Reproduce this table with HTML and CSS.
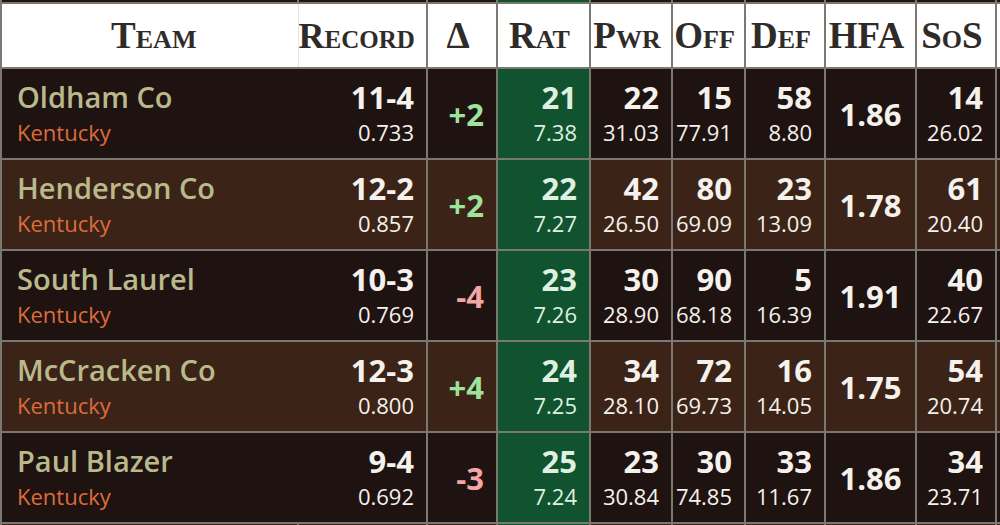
FILE: index.html
```html
<!DOCTYPE html>
<html>
<head>
<meta charset="utf-8">
<link rel="stylesheet" href="styles.css">
</head>
<body>
<div class="frame">
<table class="ratings">
  <colgroup>
    <col class="c-team"><col class="c-rec"><col class="c-delta"><col class="c-rat"><col class="c-pwr"><col class="c-off"><col class="c-def"><col class="c-hfa"><col class="c-sos"><col class="c-more">
  </colgroup>
  <tr class="stub">
    <td class="team-cell"></td><td class="rec"></td><td></td><td class="rat"></td><td></td><td></td><td></td><td></td><td></td><td></td>
  </tr>
  <tr class="head">
    <th class="h-team">Team</th>
    <th class="h-rec">Record</th>
    <th>Δ</th>
    <th>Rat</th>
    <th>Pwr</th>
    <th>Off</th>
    <th>Def</th>
    <th>HFA</th>
    <th>SoS</th>
    <th></th>
  </tr>
  <tr class="row dark">
    <td class="team-cell"><div class="name">Oldham Co</div><div class="state">Kentucky</div></td>
    <td class="rec num"><div class="big">11-4</div><div class="small">0.733</div></td>
    <td class="delta up">+2</td>
    <td class="rat num"><div class="big">21</div><div class="small">7.38</div></td>
    <td class="num"><div class="big">22</div><div class="small">31.03</div></td>
    <td class="num"><div class="big">15</div><div class="small">77.91</div></td>
    <td class="num"><div class="big">58</div><div class="small">8.80</div></td>
    <td class="hfa">1.86</td>
    <td class="num"><div class="big">14</div><div class="small">26.02</div></td>
    <td></td>
  </tr>
  <tr class="row brown">
    <td class="team-cell"><div class="name">Henderson Co</div><div class="state">Kentucky</div></td>
    <td class="rec num"><div class="big">12-2</div><div class="small">0.857</div></td>
    <td class="delta up">+2</td>
    <td class="rat num"><div class="big">22</div><div class="small">7.27</div></td>
    <td class="num"><div class="big">42</div><div class="small">26.50</div></td>
    <td class="num"><div class="big">80</div><div class="small">69.09</div></td>
    <td class="num"><div class="big">23</div><div class="small">13.09</div></td>
    <td class="hfa">1.78</td>
    <td class="num"><div class="big">61</div><div class="small">20.40</div></td>
    <td></td>
  </tr>
  <tr class="row dark">
    <td class="team-cell"><div class="name">South Laurel</div><div class="state">Kentucky</div></td>
    <td class="rec num"><div class="big">10-3</div><div class="small">0.769</div></td>
    <td class="delta down">-4</td>
    <td class="rat num"><div class="big">23</div><div class="small">7.26</div></td>
    <td class="num"><div class="big">30</div><div class="small">28.90</div></td>
    <td class="num"><div class="big">90</div><div class="small">68.18</div></td>
    <td class="num"><div class="big">5</div><div class="small">16.39</div></td>
    <td class="hfa">1.91</td>
    <td class="num"><div class="big">40</div><div class="small">22.67</div></td>
    <td></td>
  </tr>
  <tr class="row brown">
    <td class="team-cell"><div class="name">McCracken Co</div><div class="state">Kentucky</div></td>
    <td class="rec num"><div class="big">12-3</div><div class="small">0.800</div></td>
    <td class="delta up">+4</td>
    <td class="rat num"><div class="big">24</div><div class="small">7.25</div></td>
    <td class="num"><div class="big">34</div><div class="small">28.10</div></td>
    <td class="num"><div class="big">72</div><div class="small">69.73</div></td>
    <td class="num"><div class="big">16</div><div class="small">14.05</div></td>
    <td class="hfa">1.75</td>
    <td class="num"><div class="big">54</div><div class="small">20.74</div></td>
    <td></td>
  </tr>
  <tr class="row dark">
    <td class="team-cell"><div class="name">Paul Blazer</div><div class="state">Kentucky</div></td>
    <td class="rec num"><div class="big">9-4</div><div class="small">0.692</div></td>
    <td class="delta down">-3</td>
    <td class="rat num"><div class="big">25</div><div class="small">7.24</div></td>
    <td class="num"><div class="big">23</div><div class="small">30.84</div></td>
    <td class="num"><div class="big">30</div><div class="small">74.85</div></td>
    <td class="num"><div class="big">33</div><div class="small">11.67</div></td>
    <td class="hfa">1.86</td>
    <td class="num"><div class="big">34</div><div class="small">23.71</div></td>
    <td></td>
  </tr>
  <tr class="stub brown">
    <td class="team-cell"></td><td class="rec"></td><td></td><td class="rat"></td><td></td><td></td><td></td><td></td><td></td><td></td>
  </tr>
</table>
</div>
</body>
</html>
```

FILE: styles.css
```css
html, body {
  margin: 0;
  padding: 0;
  background: #1e1311;
}

.frame {
  width: 1000px;
  height: 525px;
  overflow: hidden;
}

.ratings {
  border-collapse: collapse;
  table-layout: fixed;
  width: 1023px;
  font-family: "Open Sans", "Noto Sans", sans-serif;
}

.c-team { width: 297px; }
.c-rec { width: 129px; }
.c-delta { width: 70px; }
.c-rat { width: 93px; }
.c-pwr { width: 82px; }
.c-off { width: 73px; }
.c-def { width: 80px; }
.c-hfa { width: 91px; }
.c-sos { width: 80px; }
.c-more { width: 28px; }

.ratings td, .ratings th {
  border: 2px solid #7b7872;
  padding: 0;
}

.ratings .stub td {
  height: 2px;
  font-size: 0;
  line-height: 0;
  background: #1e1311;
  border-top: none;
}

.ratings .stub.brown td {
  background: #3b2417;
}

.ratings .stub td.rat {
  background: #11532f;
}

.head th {
  background: #ffffff;
  height: 63px;
  font-family: "Liberation Serif", "Times New Roman", serif;
  font-variant: small-caps;
  font-weight: bold;
  font-size: 37px;
  color: #2f2b29;
  text-align: center;
  vertical-align: middle;
  line-height: 1;
}

.ratings .head th {
  padding-right: 8px;
}

.ratings .head th.h-team {
  padding-right: 0;
  padding-left: 8px;
  border-right: 1px solid #e4e4e4;
}

.ratings .head th.h-rec {
  text-align: right;
  padding-right: 13px;
  font-size: 36px;
  border-left: 1px solid #e4e4e4;
}

.ratings .row td {
  height: 91px;
  vertical-align: top;
  padding-top: 11px;
  box-sizing: border-box;
}

.row.dark td { background: #1e1311; }
.row.brown td { background: #3b2417; }
.ratings .row td.rat { background: #11532f; }

.ratings .row td.team-cell {
  padding-left: 15px;
  border-right: none;
}

.ratings .row td.rec {
  border-left: none;
}

.name {
  font-size: 29px;
  font-weight: 600;
  line-height: 34px;
  color: #b9b98c;
  white-space: nowrap;
}

.state {
  font-size: 22px;
  line-height: 37px;
  color: #de6c3b;
}

.ratings .row td.num {
  text-align: right;
  padding-right: 12px;
  color: #f5f1ec;
}

.big {
  font-size: 31px;
  font-weight: bold;
  line-height: 34px;
}

.small {
  font-size: 22px;
  line-height: 37px;
}

.ratings .row td.rat {
  color: #dff0e3;
}

.ratings .row td.delta, .ratings .row td.hfa {
  vertical-align: middle;
  padding-top: 0;
  font-weight: bold;
  font-size: 31px;
}

.ratings .row td.delta {
  text-align: right;
  padding-right: 12px;
}

.delta.up { color: #9de39c; }
.delta.down { color: #f2a7a4; }

.ratings .row td.hfa {
  text-align: center;
  color: #f5f1ec;
}
```
